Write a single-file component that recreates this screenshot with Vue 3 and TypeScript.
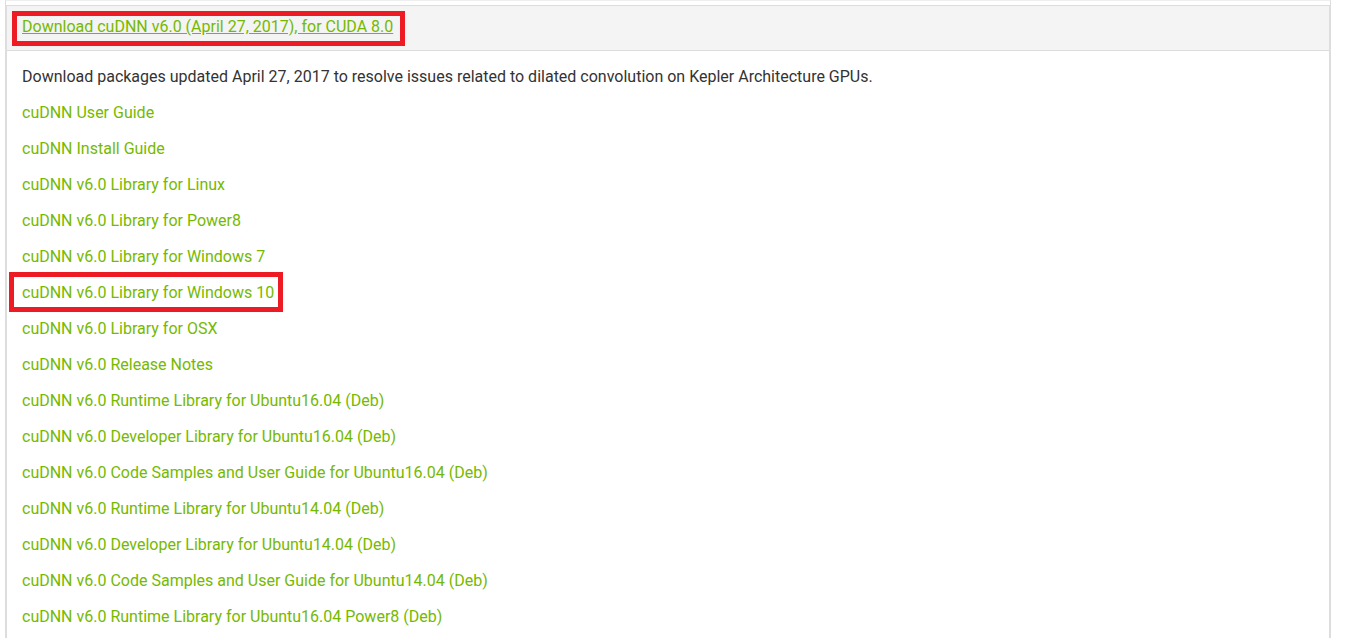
<script setup lang="ts">
const title = 'Download cuDNN v6.0 (April 27, 2017), for CUDA 8.0'

interface Download {
  label: string
  marked?: boolean
}

const downloads: Download[] = [
  { label: 'cuDNN User Guide' },
  { label: 'cuDNN Install Guide' },
  { label: 'cuDNN v6.0 Library for Linux' },
  { label: 'cuDNN v6.0 Library for Power8' },
  { label: 'cuDNN v6.0 Library for Windows 7' },
  { label: 'cuDNN v6.0 Library for Windows 10', marked: true },
  { label: 'cuDNN v6.0 Library for OSX' },
  { label: 'cuDNN v6.0 Release Notes' },
  { label: 'cuDNN v6.0 Runtime Library for Ubuntu16.04 (Deb)' },
  { label: 'cuDNN v6.0 Developer Library for Ubuntu16.04 (Deb)' },
  { label: 'cuDNN v6.0 Code Samples and User Guide for Ubuntu16.04 (Deb)' },
  { label: 'cuDNN v6.0 Runtime Library for Ubuntu14.04 (Deb)' },
  { label: 'cuDNN v6.0 Developer Library for Ubuntu14.04 (Deb)' },
  { label: 'cuDNN v6.0 Code Samples and User Guide for Ubuntu14.04 (Deb)' },
  { label: 'cuDNN v6.0 Runtime Library for Ubuntu16.04 Power8 (Deb)' },
]
</script>

<template>
  <main class="page">
    <div class="group">
      <section class="panel">
        <h4 class="heading">
          <a class="title marked" href="#downloads">{{ title }}</a>
        </h4>
        <div id="downloads" class="body">
          <p class="row">Download packages updated April 27, 2017 to resolve issues related to dilated convolution on Kepler Architecture GPUs.</p>
          <p v-for="item in downloads" :key="item.label" class="row">
            <a href="#" :class="{ marked: item.marked }">{{ item.label }}</a>
          </p>
        </div>
      </section>
    </div>
  </main>
</template>

<style scoped>
.page {
  padding: 0 15px 0 5px;
  font-family: Roboto, "Liberation Sans", sans-serif;
  font-size: 16px;
  font-weight: 400;
  line-height: 20px;
  color: #333;
}
.group {
  padding-top: 4px;
  border: 1px solid #ddd;
  border-top-color: #eee;
  border-bottom: 0;
}
.panel {
  border: 1px solid #ddd;
  border-bottom: 0;
}
.heading {
  margin: 0;
  padding: 11px 15px 13px;
  background: #f4f4f4;
  border-bottom: 1px solid #ddd;
  font-size: 16px;
  font-weight: inherit;
}
.body {
  padding: 16px 15px;
}
.row {
  margin: 0 0 16px;
}
a {
  color: #76b900;
  text-decoration: none;
}
.title {
  text-decoration: underline;
}
.marked {
  position: relative;
}
.marked::after {
  content: "";
  position: absolute;
  inset: -11px -9px -10px -13px;
  border: 5px solid #ed1c24;
  pointer-events: none;
}
.title::after {
  inset: -6px -12px -10px -10px;
}
</style>

<style>
body {
  background: #fff;
  overflow: hidden;
}
</style>
